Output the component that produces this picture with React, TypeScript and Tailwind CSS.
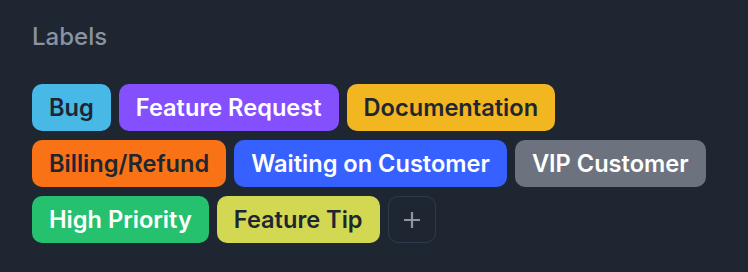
const labels = [
  { name: "Bug", cls: "bg-[#48b8e7] text-[#1e2631]" },
  { name: "Feature Request", cls: "bg-[#8450fd] text-white" },
  { name: "Documentation", cls: "bg-[#f1b620] text-[#1e2631]" },
  { name: "Billing/Refund", cls: "bg-[#f97316] text-[#1e2631]" },
  { name: "Waiting on Customer", cls: "bg-[#3661fe] text-white" },
  { name: "VIP Customer", cls: "bg-[#6c727e] text-white" },
  { name: "High Priority", cls: "bg-[#26c16e] text-white" },
  { name: "Feature Tip", cls: "bg-[#d3d853] text-[#1e2631]" },
];

export default function App() {
  return (
    <div className="min-h-[272px] w-[748px] bg-[#1e2631] pl-8 pt-[20px] font-['Inter',sans-serif]">
      <h3 className="text-[24px] font-medium leading-[34px] text-[#8b93a1]">Labels</h3>
      <div className="mt-[30px] flex flex-wrap gap-x-2 gap-y-[9px]">
        {labels.map((l) => (
          <span
            key={l.name}
            className={`flex h-[47px] items-center rounded-[10px] px-[17px] text-[23.6px] font-semibold ${l.cls}`}
          >
            {l.name}
          </span>
        ))}
        <button className="flex h-[47px] w-[48px] items-center justify-center rounded-[10px] border-[1.5px] border-[#2f3b4d] text-[#8e96a3]">
          <svg width="18" height="18" viewBox="0 0 18 18" fill="none" stroke="currentColor" strokeWidth="2.2">
            <path d="M9 1v16M1 9h16" />
          </svg>
        </button>
      </div>
    </div>
  );
}
